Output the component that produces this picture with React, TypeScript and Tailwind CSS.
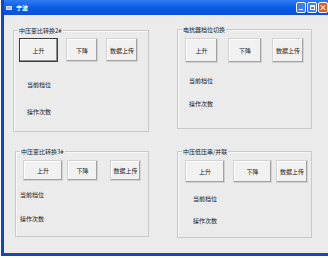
import React from 'react'

type Btn = { label: string; w: string; focused?: boolean }

type GroupProps = {
  title: string
  box: string
  btnRow: string
  btnH: string
  buttons: Btn[]
  labelBox: string
  labelGap: string
}

const font = { fontFamily: '"Noto Sans CJK SC", "Noto Sans", sans-serif' }

function XpButton({ label, w, h, focused }: Btn & { h: string }) {
  return (
    <div
      className={[
        'flex items-center justify-center bg-[#f1f1f1] text-[6px] text-[#222]',
        w,
        h,
        focused
          ? 'border border-[#3c3c3c] shadow-[inset_-1px_-1px_0_#8f8f8f,inset_1px_1px_0_#ffffff]'
          : 'border border-[#d2d2d2] shadow-[inset_-1px_-1px_0_#a2a2a2,inset_1px_1px_0_#ffffff]',
      ].join(' ')}
    >
      {label}
    </div>
  )
}

function Group({ title, box, btnRow, btnH, buttons, labelBox, labelGap }: GroupProps) {
  return (
    <div className={'relative border border-[#c9c9c9] shadow-[inset_1px_1px_0_#f7f7f7] ' + box}>
      <span className="absolute -top-[5px] left-[4px] bg-[#ebebeb] px-[1px] text-[6px] leading-[9px] text-[#222]">
        {title}
      </span>
      <div className={'flex ' + btnRow}>
        {buttons.map((b) => (
          <XpButton key={b.label} {...b} h={btnH} />
        ))}
      </div>
      <div className={'flex flex-col text-[6px] leading-[8px] text-[#222] ' + labelBox + ' ' + labelGap}>
        <span>当前档位</span>
        <span>操作次数</span>
      </div>
    </div>
  )
}

export default function App() {
  return (
    <div className="h-[258px] w-[328px] overflow-hidden bg-white" style={font}>
      <div className="ml-[1px] flex h-[256px] w-[340px] flex-col border-b-[3px] border-l-[3px] border-[#0c47d4]">
        {/* title bar */}
        <div className="flex h-[15px] shrink-0 items-center bg-gradient-to-b from-[#2f7bf3] via-[#0a5be6] to-[#0652dd] pl-[2px]">
          <div className="mr-[4px] h-[4px] w-[6px] border border-[#e8e8e8] bg-[#9ab8e8]" />
          <span className="text-[6px] font-bold text-white">宁波</span>
          <div className="ml-auto mr-[13px] flex gap-[1px]">
            <div className="flex h-[11px] w-[10px] items-end justify-center rounded-[2px] border border-white bg-[#3d7cf2] pb-[2px]">
              <div className="h-[1px] w-[4px] bg-white" />
            </div>
            <div className="flex h-[11px] w-[10px] items-center justify-center rounded-[2px] border border-white bg-[#3d7cf2]">
              <div className="h-[5px] w-[5px] border border-t-2 border-white" />
            </div>
            <div className="flex h-[11px] w-[10px] items-center justify-center rounded-[2px] border border-white bg-[#e35a2a] text-[8px] font-bold leading-none text-white">
              ×
            </div>
          </div>
        </div>
        {/* client area */}
        <div className="flex flex-1 flex-col border-b-[2px] border-l-[2px] border-[#f6e9cf] bg-[#ebebeb] pl-[7px] pt-[14px]">
          <div className="flex">
            <Group
              title="中压变比转换2#"
              box="mt-[1px] h-[102px] w-[136px]"
              btnRow="ml-[5px] mt-[7px] gap-[8px]"
              btnH="h-[24px]"
              buttons={[
                { label: '上升', w: 'w-[39px]', focused: true },
                { label: '下降', w: 'w-[32px]' },
                { label: '数据上传', w: 'w-[32px]' },
              ]}
              labelBox="ml-[13px] mt-[19px]"
              labelGap="gap-[19px]"
            />
            <Group
              title="电抗器档位切换"
              box="ml-[28px] h-[100px] w-[135px]"
              btnRow="ml-[7px] mt-[8px] gap-[10px]"
              btnH="h-[25px]"
              buttons={[
                { label: '上升', w: 'w-[33px]' },
                { label: '下降', w: 'w-[34px]' },
                { label: '数据上传', w: 'w-[32px]' },
              ]}
              labelBox="ml-[11px] mt-[14px]"
              labelGap="gap-[15px]"
            />
          </div>
          <div className="mt-[19px] flex">
            <Group
              title="中压变比转换3#"
              box="ml-[2px] h-[86px] w-[134px]"
              btnRow="ml-[7px] mt-[8px] gap-[4px]"
              btnH="h-[21px]"
              buttons={[
                { label: '上升', w: 'w-[40px]' },
                { label: '下降', w: 'w-[31px]' },
                { label: '数据上传', w: 'w-[31px] ml-[8px]' },
              ]}
              labelBox="ml-[4px] mt-[10px]"
              labelGap="gap-[16px]"
            />
            <Group
              title="中压低压串/并联"
              box="ml-[28px] h-[87px] w-[135px]"
              btnRow="ml-[7px] mt-[8px] gap-[8px]"
              btnH="h-[23px]"
              buttons={[
                { label: '上升', w: 'w-[40px]' },
                { label: '下降', w: 'w-[39px]' },
                { label: '数据上传', w: 'w-[32px] -ml-[4px]' },
              ]}
              labelBox="ml-[15px] mt-[12px]"
              labelGap="gap-[14px]"
            />
          </div>
        </div>
      </div>
    </div>
  )
}
